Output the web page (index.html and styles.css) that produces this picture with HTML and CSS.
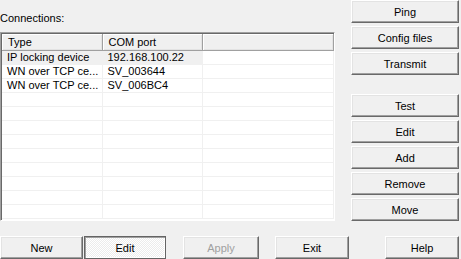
FILE: index.html
```html
<!DOCTYPE html>
<html>
<head>
    <title>Connections</title>
    <link rel="stylesheet" href="styles.css">
</head>
<body>
    <div class="window">
        <div class="top">
            <div class="left">
                <div class="caption">Connections:</div>
                <div class="listbox">
                    <table class="list">
                        <colgroup>
                            <col class="col-type">
                            <col class="col-port">
                            <col>
                        </colgroup>
                        <thead>
                            <tr><th>Type</th><th>COM port</th><th></th></tr>
                        </thead>
                        <tbody>
                            <tr class="hot"><td>IP locking device</td><td>192.168.100.22</td><td></td></tr>
                            <tr><td>WN over TCP ce...</td><td>SV_003644</td><td></td></tr>
                            <tr><td>WN over TCP ce...</td><td>SV_006BC4</td><td></td></tr>
                            <tr><td></td><td></td><td></td></tr>
                            <tr><td></td><td></td><td></td></tr>
                            <tr><td></td><td></td><td></td></tr>
                            <tr><td></td><td></td><td></td></tr>
                            <tr><td></td><td></td><td></td></tr>
                            <tr><td></td><td></td><td></td></tr>
                            <tr><td></td><td></td><td></td></tr>
                            <tr><td></td><td></td><td></td></tr>
                            <tr><td></td><td></td><td></td></tr>
                        </tbody>
                    </table>
                </div>
            </div>
            <div class="side">
                <button class="btn">Ping</button>
                <button class="btn">Config files</button>
                <button class="btn">Transmit</button>
                <div class="spacer"></div>
                <button class="btn">Test</button>
                <button class="btn">Edit</button>
                <button class="btn">Add</button>
                <button class="btn">Remove</button>
                <button class="btn">Move</button>
            </div>
        </div>
        <div class="bottom">
            <button class="btn b-new">New</button>
            <button class="btn b-edit default">Edit</button>
            <button class="btn b-apply" disabled>Apply</button>
            <button class="btn b-exit">Exit</button>
            <button class="btn b-help">Help</button>
        </div>
    </div>
</body>
</html>
```

FILE: styles.css
```css
body {
    margin: 0;
    padding: 0;
    background: #f0f0f0;
    font-family: "Liberation Sans", Arial, sans-serif;
    font-size: 11px;
    color: #000;
}

.window {
    width: 461px;
    height: 259px;
    overflow: hidden;
}

.top {
    display: flex;
    height: 221px;
}

.left {
    width: 335px;
    padding-top: 12px;
}

.caption {
    height: 13px;
    line-height: 13px;
    margin-bottom: 7px;
}

.listbox {
    box-sizing: border-box;
    height: 189px;
    background: #fff;
    border-top: 1px solid #a0a0a0;
    border-left: 1px solid #a0a0a0;
    border-right: 1px solid #fff;
    border-bottom: 1px solid #fff;
    box-shadow: inset 1px 1px #696969;
    padding: 1px 0 0 1px;
    overflow: hidden;
}

.list {
    width: 100%;
    border-collapse: collapse;
    table-layout: fixed;
}

.col-type {
    width: 100px;
}

.col-port {
    width: 100px;
}

.list th {
    height: 16px;
    padding: 0 0 0 6px;
    text-align: left;
    font-weight: normal;
    background: #f0f0f0;
    border-right: 1px solid #a0a0a0;
    border-bottom: 1px solid #a0a0a0;
    box-shadow: inset 1px 1px #fff, inset -1px -1px #e3e3e3;
    white-space: nowrap;
}

.list td {
    height: 13px;
    padding: 0 0 0 5px;
    line-height: 13px;
    border-right: 1px solid #f0f0f0;
    border-bottom: 1px solid #f0f0f0;
    white-space: nowrap;
    overflow: hidden;
}

.list tr.hot td:nth-child(-n+2) {
    background: #f0f0f0;
}

.side {
    display: flex;
    flex-direction: column;
    gap: 3px;
    width: 108px;
    margin-left: 16px;
}

.spacer {
    height: 13px;
}

.btn {
    box-sizing: border-box;
    height: 23px;
    padding: 0;
    font-family: "Liberation Sans", Arial, sans-serif;
    font-size: 11px;
    color: #000;
    background: #f0f0f0;
    border: 1px solid;
    border-color: #fff #696969 #696969 #fff;
    box-shadow: inset -1px -1px #a0a0a0, inset 1px 1px #e3e3e3;
    border-radius: 0;
}

.btn:disabled {
    color: #a0a0a0;
}

.btn.default {
    border-color: #646464;
    box-shadow: inset 1px 1px #a0a0a0, inset -1px -1px #fff;
    background-color: #fff;
    background-image: conic-gradient(#ececec 25%, #fff 0 50%, #ececec 0 75%, #fff 0);
    background-size: 2px 2px;
}

.bottom {
    display: flex;
    margin-top: 15px;
}

.b-new {
    width: 83px;
}

.b-edit {
    width: 82px;
    margin-left: 1px;
}

.b-apply {
    width: 76px;
    margin-left: 17px;
}

.b-exit {
    width: 74px;
    margin-left: 16px;
}

.b-help {
    width: 74px;
    margin-left: 36px;
}
```
